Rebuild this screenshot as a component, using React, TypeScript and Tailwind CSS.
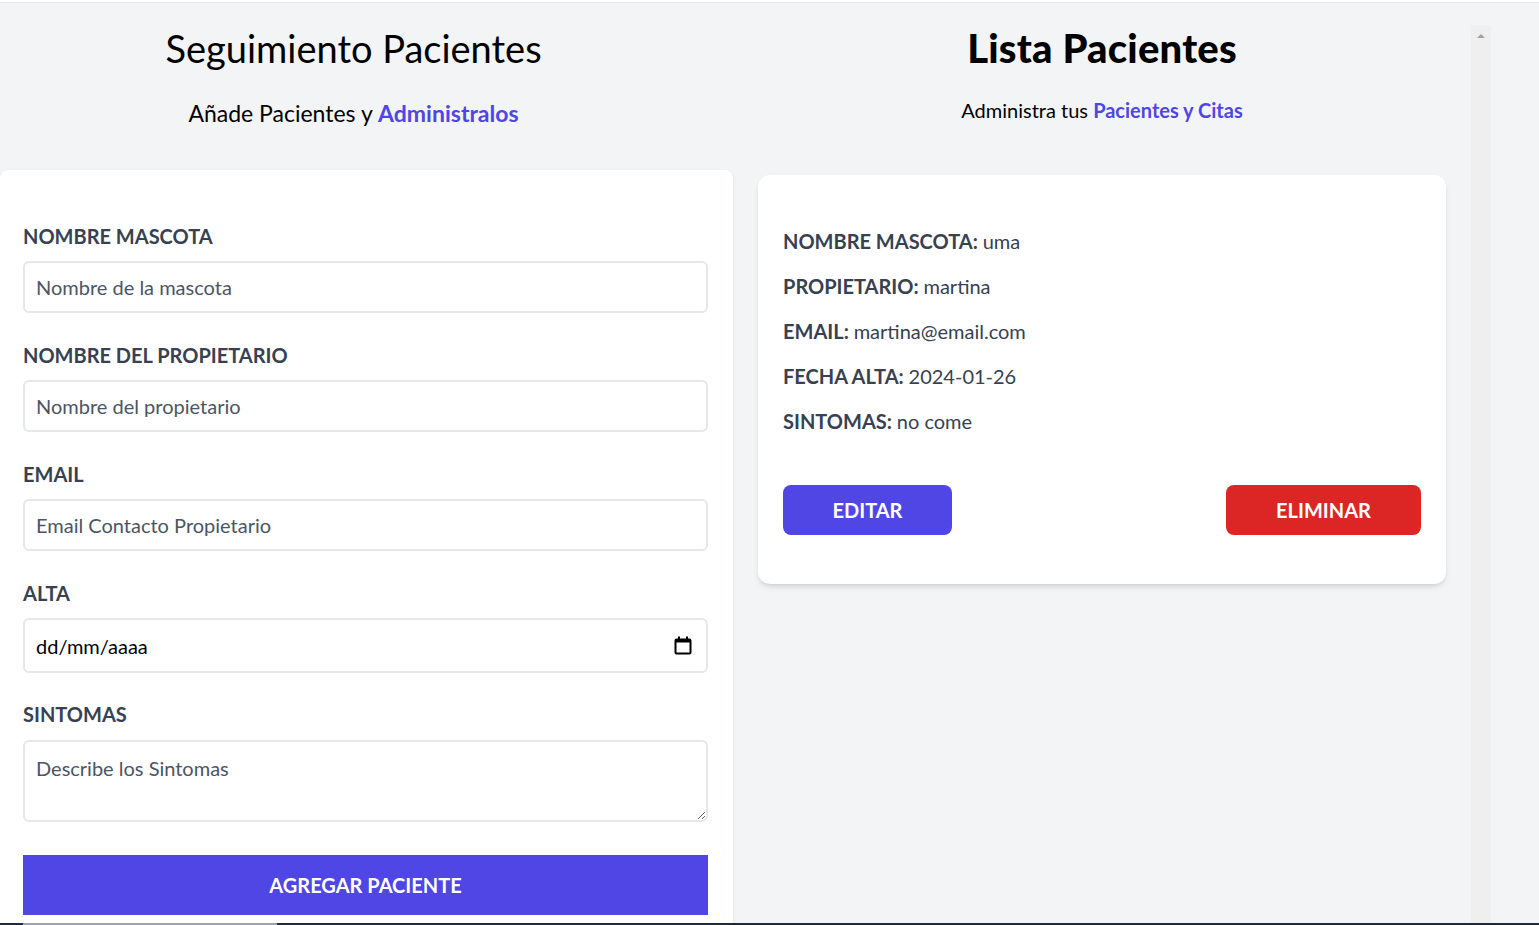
import React from 'react'

const fields = [
    { id: 'mascota', label: 'Nombre Mascota', placeholder: 'Nombre de la mascota' },
    { id: 'propietario', label: 'Nombre del Propietario', placeholder: 'Nombre del propietario' },
    { id: 'email', label: 'Email', placeholder: 'Email Contacto Propietario' },
]

const paciente = [
    { label: 'Nombre Mascota', value: 'uma' },
    { label: 'Propietario', value: 'martina' },
    { label: 'Email', value: 'martina@email.com' },
    { label: 'Fecha Alta', value: '2024-01-26' },
    { label: 'Sintomas', value: 'no come' },
]

function Formulario() {
    return (
        <div className="flex flex-col w-[733px] pt-[22px]">
            <div className="flex flex-col items-center pr-[26px] h-[145px]">
                <h2 className="text-[38px] leading-10 text-black mt-[3px]">Seguimiento Pacientes</h2>
                <p className="text-[23px] leading-[28px] mt-[31px] text-black">
                    Añade Pacientes y <span className="text-[#4f46e5] font-bold">Administralos</span>
                </p>
            </div>
            <form className="flex-1 bg-white rounded-t-lg shadow-sm pl-[23px] pr-[25px] pt-[52px]">
                {fields.map(field => (
                    <div key={field.id} className="flex flex-col mb-[28px]">
                        <label htmlFor={field.id} className="uppercase font-bold text-[#374151] text-[20px] leading-[28px] mb-[11px]">
                            {field.label}
                        </label>
                        <input
                            id={field.id}
                            type="text"
                            placeholder={field.placeholder}
                            className="h-[52px] border-2 border-[#e5e7eb] rounded-md px-[11px] text-[20px] placeholder:text-[#4b5563] outline-none"
                        />
                    </div>
                ))}
                <div className="flex flex-col mb-[27px]">
                    <label htmlFor="alta" className="uppercase font-bold text-[#374151] text-[20px] leading-[28px] mb-[11px]">Alta</label>
                    <div className="h-[55px] border-2 border-[#e5e7eb] rounded-md pl-[11px] pr-[14px] flex items-center justify-between">
                        <input id="alta" type="text" placeholder="dd/mm/aaaa" className="flex-1 text-[20px] placeholder:text-black outline-none" />
                        <svg width="18" height="19" viewBox="0 0 18 19" fill="none">
                            <rect x="1.5" y="3.5" width="15" height="14" rx="1" stroke="black" strokeWidth="2" />
                            <rect x="1.5" y="3.5" width="15" height="3" fill="black" />
                            <rect x="4" y="0.5" width="2" height="4" fill="black" />
                            <rect x="12" y="0.5" width="2" height="4" fill="black" />
                        </svg>
                    </div>
                </div>
                <div className="flex flex-col mb-[33px]">
                    <label htmlFor="sintomas" className="uppercase font-bold text-[#374151] text-[20px] leading-[28px] mb-[12px]">Sintomas</label>
                    <textarea
                        id="sintomas"
                        placeholder="Describe los Sintomas"
                        className="h-[82px] border-2 border-[#e5e7eb] rounded-md px-[11px] py-[12px] text-[20px] leading-[28px] placeholder:text-[#4b5563] outline-none"
                    />
                </div>
                <input
                    type="submit"
                    value="Agregar Paciente"
                    className="w-full h-[60px] bg-[#4f46e5] text-white uppercase font-bold text-[20px]"
                />
            </form>
        </div>
    )
}

function ListadoPacientes() {
    return (
        <div className="flex w-[758px] pt-[22px]">
            <div className="flex-1 flex flex-col px-[25px]">
                <div className="flex flex-col items-center h-[150px]">
                    <h2 className="text-[40px] leading-10 font-black text-black tracking-[0.2px] mt-[3px]">Lista Pacientes</h2>
                    <p className="text-[20px] leading-[28px] mt-[28px] text-black">
                        Administra tus <span className="text-[#4f46e5] font-bold">Pacientes y Citas</span>
                    </p>
                </div>
                <div className="bg-white rounded-xl shadow-md px-[25px] pt-[52px] pb-[49px]">
                    <div className="flex flex-col gap-[17px]">
                        {paciente.map(item => (
                            <p key={item.label} className="text-[#374151] text-[20px] leading-[28px]">
                                <span className="uppercase font-bold">{item.label}: </span>
                                {item.value}
                            </p>
                        ))}
                    </div>
                    <div className="flex justify-between mt-[50px]">
                        <button className="w-[169px] h-[50px] rounded-lg bg-[#4f46e5] text-white uppercase font-bold text-[20px]">Editar</button>
                        <button className="w-[195px] h-[50px] rounded-lg bg-[#dc2626] text-white uppercase font-bold text-[20px]">Eliminar</button>
                    </div>
                </div>
            </div>
            <div className="w-[20px] bg-[#efefef] flex justify-center pt-[9px]">
                <div className="w-0 h-0 border-l-[4px] border-r-[4px] border-b-[4px] border-l-transparent border-r-transparent border-b-[#a3a3a3]" />
            </div>
        </div>
    )
}

export default function App() {
    return (
        <div className="h-[925px] overflow-hidden flex flex-col bg-[#f3f4f6] font-['Lato',sans-serif]">
            <div className="h-[2px] bg-white" />
            <div className="h-px bg-[#e5e7eb]" />
            <div className="flex-1 flex min-h-0">
                <Formulario />
                <ListadoPacientes />
            </div>
            <div className="h-[2px] flex">
                <div className="w-[23px] bg-[#1e293b]" />
                <div className="w-[254px] bg-[#9ca3af]" />
                <div className="flex-1 bg-[#1e293b]" />
            </div>
        </div>
    )
}
